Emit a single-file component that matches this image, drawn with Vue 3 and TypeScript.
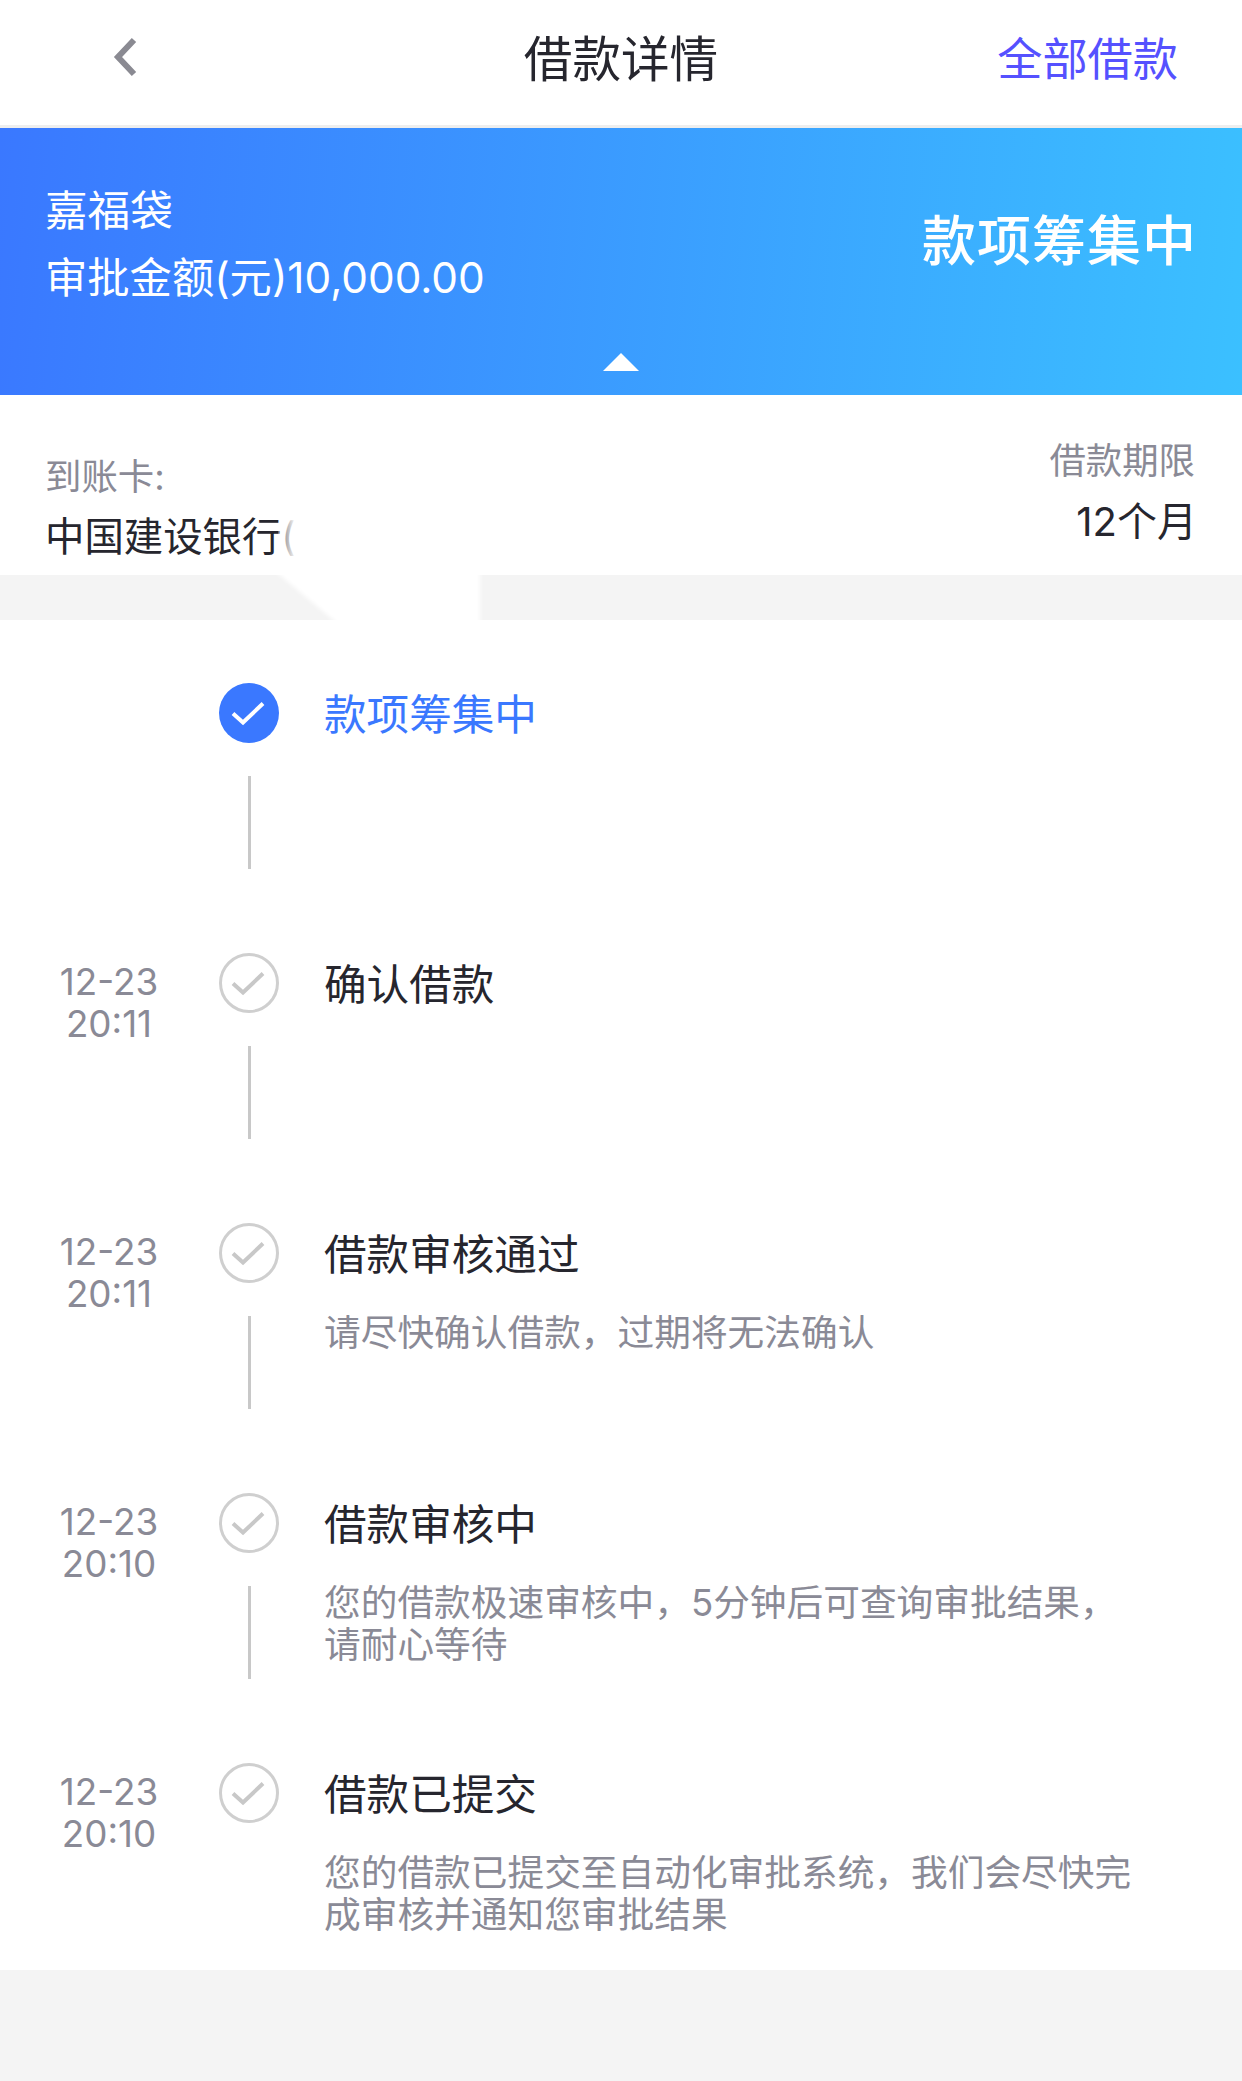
<template>
  <div class="page">
    <header class="nav">
      <div class="nav-left">
        <svg class="back" width="24" height="40" viewBox="0 0 24 40">
          <path d="M21 3 L5 20 L21 37" fill="none" stroke="#8a8a92" stroke-width="6" />
        </svg>
      </div>
      <div class="nav-title">借款详情</div>
      <div class="nav-link">全部借款</div>
    </header>

    <section class="banner">
      <div class="banner-left">
        <div class="product">嘉福袋</div>
        <div class="amount">审批金额(元)10,000.00</div>
      </div>
      <div class="status">款项筹集中</div>
      <div class="arrow"></div>
    </section>

    <section class="info">
      <div class="info-left">
        <div class="label">到账卡:</div>
        <div class="bank">中国建设银行(<span class="bank-fade"></span></div>
      </div>
      <div class="info-right">
        <div class="label">借款期限</div>
        <div class="term">12个月</div>
      </div>
    </section>

    <div class="band">
      <svg class="smear" width="250" height="75" viewBox="0 0 250 75">
        <polygon points="12,0 101,75 230,75 230,0" fill="#fff" />
      </svg>
    </div>

    <section class="timeline">
      <div v-for="(s, i) in steps" :key="i" class="step">
        <div class="date">
          <div v-if="s.date">{{ s.date }}</div>
          <div v-if="s.time">{{ s.time }}</div>
        </div>
        <div class="node">
          <svg width="60" height="60" viewBox="0 0 60 60">
            <circle v-if="s.active" cx="30" cy="30" r="30" fill="#3a78ff" />
            <circle v-else cx="30" cy="30" r="28.5" fill="none" stroke="#cfcfcf" stroke-width="3" />
            <path d="M14 30.5 L24 39.5 L44 20.5" fill="none" :stroke="s.active ? '#fff' : '#c8c8c8'" stroke-width="4" />
          </svg>
          <div v-if="i < steps.length - 1" class="line"></div>
        </div>
        <div class="body">
          <div class="title" :class="{ on: s.active }">{{ s.title }}</div>
          <div v-if="s.desc" class="desc">{{ s.desc }}</div>
        </div>
      </div>
    </section>
  </div>
</template>

<script setup lang="ts">
interface Step {
  date?: string
  time?: string
  title: string
  desc?: string
  active?: boolean
}

const steps: Step[] = [
  { title: '款项筹集中', active: true },
  { date: '12-23', time: '20:11', title: '确认借款' },
  { date: '12-23', time: '20:11', title: '借款审核通过', desc: '请尽快确认借款，过期将无法确认' },
  { date: '12-23', time: '20:10', title: '借款审核中', desc: '您的借款极速审核中，5分钟后可查询审批结果，请耐心等待' },
  { date: '12-23', time: '20:10', title: '借款已提交', desc: '您的借款已提交至自动化审批系统，我们会尽快完成审核并通知您审批结果' }
]
</script>

<style>
html, body {
  margin: 0;
  background: #f4f4f4;
}
</style>

<style scoped>
.page {
  width: 1242px;
  height: 2081px;
  background: #f4f4f4;
  font-family: Inter, "Noto Sans CJK SC", sans-serif;
  color: #26262e;
  overflow: hidden;
}
.nav {
  height: 125px;
  background: #fff;
  border-bottom: 3px solid #eeeeee;
  display: grid;
  grid-template-columns: 1fr auto 1fr;
  align-items: center;
  padding: 0 64px;
}
.nav-left {
  display: flex;
  align-items: center;
  margin-top: -11px;
  padding-left: 49px;
}
.nav-title {
  font-size: 48.6px;
  line-height: 60px;
  margin-top: -5px;
}
.nav-link {
  justify-self: end;
  font-size: 45.2px;
  line-height: 60px;
  margin-top: -6px;
  color: #5551ff;
}
.banner {
  position: relative;
  height: 267px;
  background: linear-gradient(95deg, #3a78ff 0%, #3bc0ff 100%);
  color: #fff;
  display: flex;
  justify-content: space-between;
  padding: 0 45px;
}
.banner-left {
  padding-top: 53px;
}
.product {
  font-size: 42.6px;
  line-height: 60px;
}
.amount {
  font-size: 42.3px;
  line-height: 60px;
  margin-top: 7px;
}
.status {
  font-size: 54px;
  font-weight: 500;
  line-height: 70px;
  margin-top: 79px;
  letter-spacing: 1px;
}
.arrow {
  position: absolute;
  left: 603px;
  bottom: 24px;
  width: 0;
  height: 0;
  border-left: 18px solid transparent;
  border-right: 18px solid transparent;
  border-bottom: 18px solid #fff;
}
.info {
  height: 180px;
  background: #fff;
  display: flex;
  justify-content: space-between;
  padding: 0 47px 0 45px;
}
.info-left {
  padding-top: 61px;
}
.info-right {
  padding-top: 45px;
  text-align: right;
}
.label {
  font-size: 36.4px;
  line-height: 42px;
  color: #8a8a96;
}
.bank {
  position: relative;
  width: 250px;
  font-size: 39.4px;
  line-height: 50px;
  margin-top: 14px;
  white-space: nowrap;
}
.bank-fade {
  position: absolute;
  top: 0;
  left: 233px;
  width: 30px;
  height: 54px;
  background: linear-gradient(90deg, rgba(255, 255, 255, 0.3), #fff 60%);
}
.term {
  font-size: 40px;
  line-height: 50px;
  margin: 15px -2px 0 0;
}
.band {
  position: relative;
  height: 45px;
  overflow: hidden;
}
.smear {
  position: absolute;
  left: 250px;
  top: -15px;
  filter: blur(2px);
}
.timeline {
  background: #fff;
  padding: 63px 0 0;
  height: 1287px;
}
.step {
  display: flex;
  height: 270px;
}
.step:last-child {
  height: 207px;
}
.date {
  width: 219px;
  box-sizing: border-box;
  padding: 8px 1px 0 0;
  text-align: center;
  font-size: 36.8px;
  line-height: 42px;
  color: #8a8a96;
}
.node {
  width: 60px;
  margin-right: 45px;
  display: flex;
  flex-direction: column;
  align-items: center;
}
.node svg {
  display: block;
  flex: none;
}
.line {
  width: 3px;
  height: 93px;
  margin-top: 33px;
  background: #c8c8c8;
}
.body {
  width: 820px;
}
.title {
  font-size: 42.6px;
  line-height: 60px;
  margin-top: 2px;
}
.title.on {
  color: #3a78ff;
}
.desc {
  margin-top: 27px;
  font-size: 36.7px;
  line-height: 42px;
  color: #8a8a96;
}
</style>
